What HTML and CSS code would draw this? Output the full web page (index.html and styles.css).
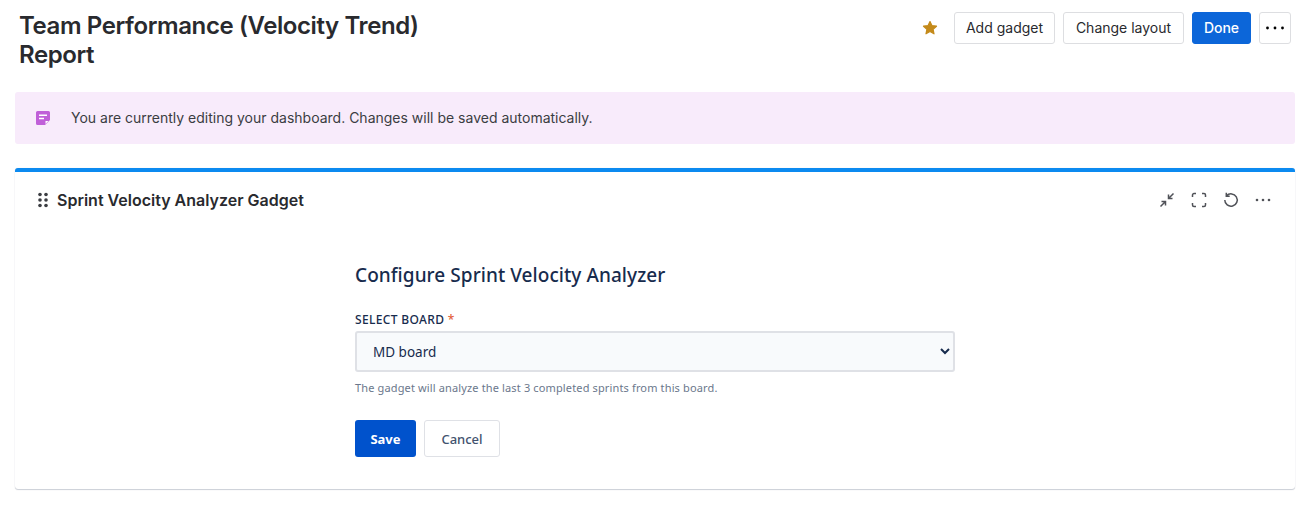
FILE: index.html
```html
<!DOCTYPE html>
<html lang="en">
<head>
    <meta charset="UTF-8">
    <meta name="viewport" content="width=device-width, initial-scale=1.0">
    <title>Team Performance (Velocity Trend) Report</title>
    <link rel="stylesheet" href="styles.css">
</head>
<body>
    <header class="page-header">
        <h1 class="page-title">Team Performance (Velocity Trend) Report</h1>
        <div class="page-actions">
            <svg class="star" width="16" height="16" viewBox="0 0 16 16"><path d="M8 1.500l1.900 4.100 4.600.6-3.400 3.100.9 4.500-4-2.300-4 2.300.9-4.500-3.400-3.100 4.600-.6z" fill="#c48a1a" stroke="#c48a1a" stroke-width="1.200" stroke-linejoin="round"/></svg>
            <button class="btn btn-add">Add gadget</button>
            <button class="btn btn-layout">Change layout</button>
            <button class="btn btn-primary">Done</button>
            <button class="btn btn-more" aria-label="More">
                <svg width="18" height="4" viewBox="0 0 18 4"><circle cx="1.500" cy="2" r="1.400"/><circle cx="9" cy="2" r="1.400"/><circle cx="16.500" cy="2" r="1.400"/></svg>
            </button>
        </div>
    </header>

    <div class="banner">
        <svg class="banner-icon" width="16" height="16" viewBox="0 0 16 16">
            <path d="M2.500 1h11A1.500 1.500 0 0 1 15 2.500V10l-5 5H2.500A1.500 1.500 0 0 1 1 13.500v-11A1.500 1.500 0 0 1 2.500 1z" fill="#c05fd8"/>
            <path d="M4 4.500h8v1.500H4zM4 7.800h5v1.500H4z" fill="#fff"/>
            <path d="M10.500 11h3l-3 3z" fill="#fff"/>
        </svg>
        <span class="banner-text">You are currently editing your dashboard. Changes will be saved automatically.</span>
    </div>

    <section class="gadget">
        <div class="gadget-header">
            <svg class="drag" width="10" height="16" viewBox="0 0 10 16"><circle cx="2" cy="2.500" r="1.800"/><circle cx="8" cy="2.500" r="1.800"/><circle cx="2" cy="8" r="1.800"/><circle cx="8" cy="8" r="1.800"/><circle cx="2" cy="13.500" r="1.800"/><circle cx="8" cy="13.500" r="1.800"/></svg>
            <h2 class="gadget-title">Sprint Velocity Analyzer Gadget</h2>
            <div class="gadget-tools">
                <svg width="16" height="16" viewBox="0 0 16 16"><path d="M1.500 14.500L6.500 9.500M2.500 9.500h4V13.500M14.500 1.500L9.500 6.500M13.500 6.500h-4V2.500"/></svg>
                <svg width="16" height="16" viewBox="0 0 16 16"><path d="M1.500 5V3a1.500 1.500 0 0 1 1.500-1.500h2M11 1.500h2A1.500 1.500 0 0 1 14.500 3v2M14.500 11v2a1.500 1.500 0 0 1-1.500 1.500h-2M5 14.500H3A1.500 1.500 0 0 1 1.500 13v-2"/></svg>
                <svg width="16" height="16" viewBox="0 0 16 16"><path d="M3.500 3.800A6.200 6.200 0 1 1 1.800 8M3.300 .8v3.400h3.400"/></svg>
                <svg class="tool-more" width="16" height="4" viewBox="0 0 16 4"><circle cx="2" cy="2" r="1.300"/><circle cx="8" cy="2" r="1.300"/><circle cx="14" cy="2" r="1.300"/></svg>
            </div>
        </div>

        <form class="config">
            <h3 class="config-title">Configure Sprint Velocity Analyzer</h3>
            <label class="field-label" for="board">SELECT BOARD <span class="required">*</span></label>
            <select id="board" class="field-select">
                <option>MD board</option>
            </select>
            <p class="field-help">The gadget will analyze the last 3 completed sprints from this board.</p>
            <div class="config-actions">
                <button type="button" class="form-btn form-save">Save</button>
                <button type="button" class="form-btn form-cancel">Cancel</button>
            </div>
        </form>
    </section>
</body>
</html>
```

FILE: styles.css
```css
* {
    box-sizing: border-box;
}

body {
    margin: 0;
    padding: 0 20px 20px 15px;
    font-family: Inter, sans-serif;
    color: #292a2e;
    background-color: #fff;
}

.page-header {
    display: flex;
    justify-content: space-between;
    align-items: flex-start;
    height: 92px;
    padding: 11px 4px 0 4px;
}

.page-title {
    width: 420px;
    margin: 0;
    font-size: 24px;
    font-weight: 600;
    line-height: 29px;
    letter-spacing: -0.4px;
}

.page-actions {
    display: flex;
    align-items: center;
    gap: 8px;
    padding-top: 1px;
}

.star {
    margin-right: 8px;
}

.btn {
    height: 32px;
    padding: 0 0 2px;
    font-family: inherit;
    font-size: 14px;
    font-weight: 400;
    color: #292a2e;
    background-color: #fff;
    border: 1px solid #dddee1;
    border-radius: 3px;
    cursor: pointer;
}

.btn-add {
    width: 101px;
}

.btn-layout {
    width: 121px;
}

.btn-primary {
    width: 59px;
    font-weight: 500;
    color: #fff;
    background-color: #0c66d9;
    border-color: #0c66d9;
}

.btn-more {
    display: flex;
    align-items: center;
    justify-content: center;
    width: 32px;
    padding: 0;
}

.banner {
    display: flex;
    align-items: center;
    gap: 20px;
    height: 52px;
    padding: 0 20px;
    font-size: 14px;
    color: #3b3d42;
    background-color: #f8ebfb;
    border-radius: 3px;
}

.banner-text {
    padding-bottom: 2px;
}

.gadget {
    height: 321px;
    margin-top: 24px;
    border-top: 4px solid #0c8af0;
    border-radius: 3px;
    background-color: #fff;
    box-shadow: 0 1px 1px rgba(9, 30, 66, 0.2), 0 0 1px rgba(9, 30, 66, 0.15);
}

.gadget-header {
    display: flex;
    align-items: center;
    height: 48px;
    padding: 8px 24px 0 23px;
}

.drag {
    margin-right: 9px;
    fill: #3b3d42;
}

.gadget-title {
    flex: 1;
    margin: 0;
    font-size: 16px;
    font-weight: 600;
    color: #292a2e;
}

.gadget-tools {
    display: flex;
    align-items: center;
    gap: 16px;
}

.gadget-tools svg {
    fill: none;
    stroke: #505258;
    stroke-width: 1.500;
}

.gadget-tools .tool-more {
    fill: #505258;
    stroke: none;
}

.config {
    width: 600px;
    margin: 0 auto;
    padding-top: 42px;
    font-family: "Noto Sans", sans-serif;
}

.config-title {
    margin: 0;
    font-size: 19px;
    font-weight: 500;
    line-height: 26px;
    letter-spacing: 0.06px;
    color: #172b4d;
}

.field-label {
    display: block;
    margin-top: 24px;
    font-size: 12px;
    font-weight: 500;
    line-height: 16px;
    letter-spacing: 0.35px;
    color: #172b4d;
}

.required {
    color: #e2603a;
}

.field-select {
    display: block;
    width: 100%;
    height: 41px;
    margin-top: 3px;
    padding: 0 12px;
    font-family: inherit;
    font-size: 13.500px;
    color: #172b4d;
    background-color: #f8fafc;
    border: 2px solid #dfe1e6;
    border-radius: 3px;
}

.field-help {
    margin: 8px 0 0;
    font-size: 11px;
    line-height: 16px;
    letter-spacing: 0.14px;
    color: #6b778c;
}

.config-actions {
    display: flex;
    gap: 8px;
    margin-top: 24px;
}

.form-btn {
    height: 37px;
    font-family: inherit;
    font-size: 13px;
    border-radius: 3px;
    cursor: pointer;
}

.form-save {
    width: 61px;
    font-weight: 700;
    color: #fff;
    background-color: #0052cc;
    border: none;
}

.form-cancel {
    width: 76px;
    font-weight: 500;
    color: #42526e;
    background-color: #fff;
    border: 1px solid #dfe1e6;
}
```
